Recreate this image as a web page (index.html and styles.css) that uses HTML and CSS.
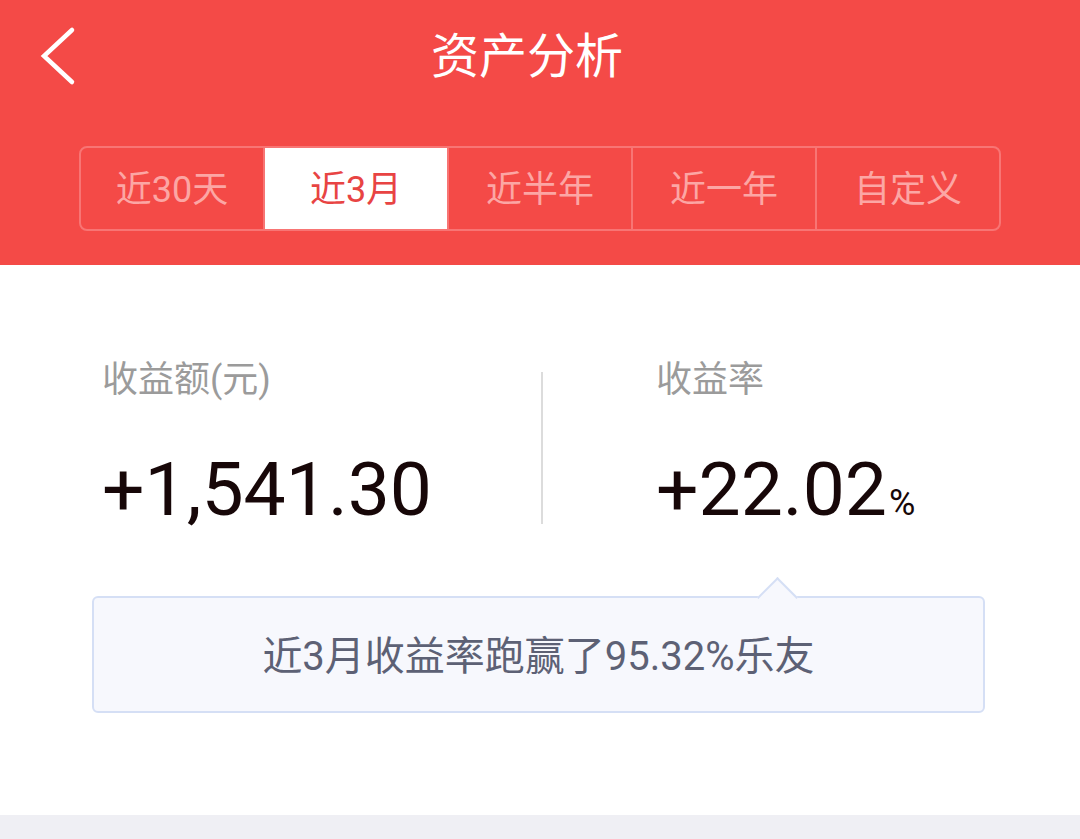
FILE: index.html
```html
<!DOCTYPE html>
<html lang="zh-CN">

<head>
    <meta charset="UTF-8">
    <meta name="viewport" content="width=device-width, initial-scale=1.0">
    <title>资产分析</title>
    <link rel="stylesheet" href="styles.css">
</head>

<body>

    <div class="header">
        <div class="navbar">
            <a class="back" href="#">
                <svg width="40" height="60" viewBox="0 0 40 60">
                    <polyline points="32,4 4,30 32,56" fill="none" stroke="#fff" stroke-width="4.5" stroke-linecap="round" stroke-linejoin="miter"/>
                </svg>
            </a>
            <h1 class="title">资产分析</h1>
            <div></div>
        </div>
        <div class="tabs">
            <div class="tab">近30天</div>
            <div class="tab active">近3月</div>
            <div class="tab">近半年</div>
            <div class="tab">近一年</div>
            <div class="tab">自定义</div>
        </div>
    </div>

    <div class="summary">
        <div class="stats">
            <div class="stat">
                <div class="stat-label">收益额(元)</div>
                <div class="stat-value">+1,541.30</div>
            </div>
            <div class="divider"></div>
            <div class="stat stat-right">
                <div class="stat-label">收益率</div>
                <div class="stat-value">+22.02<span class="unit">%</span></div>
            </div>
        </div>

        <div class="tip">
            <span class="tip-arrow"></span>
            近3月收益率跑赢了95.32%乐友
        </div>
    </div>

    <div class="footer-gap"></div>

</body>

</html>
```

FILE: styles.css
```css
body {
    margin: 0;
    padding: 0;
    font-family: Roboto, "Noto Sans CJK SC", sans-serif;
    background-color: #efeff4;
}

.header {
    background-color: #f44a47;
    height: 265px;
    box-sizing: border-box;
}

.navbar {
    display: grid;
    grid-template-columns: 1fr auto 1fr;
    align-items: center;
    height: 112px;
}

.back {
    display: flex;
    align-items: center;
    padding-left: 40px;
    height: 112px;
}

.title {
    margin: 0 26px 8px 0;
    color: #fff;
    font-size: 48px;
    font-weight: normal;
    line-height: 96px;
    font-family: "Noto Sans CJK SC", sans-serif;
}

.tabs {
    display: flex;
    margin: 34px 79px 0 79px;
    border: 2px solid #f87574;
    border-radius: 8px;
    height: 85px;
    box-sizing: border-box;
    overflow: hidden;
}

.tab {
    flex: 1;
    display: flex;
    align-items: center;
    justify-content: center;
    color: #fca6a4;
    font-size: 36px;
    padding-bottom: 6px;
    border-left: 2px solid #f87574;
}

.tab:first-child {
    border-left: none;
}

.tab.active {
    background-color: #fff;
    color: #e84443;
}

.summary {
    background-color: #fff;
    height: 550px;
    box-sizing: border-box;
    padding-top: 93px;
}

.stats {
    display: flex;
    padding-left: 102px;
}

.stat {
    width: 439px;
    flex-shrink: 0;
}

.stat-right {
    width: auto;
    flex: 1;
    padding-left: 113px;
}

.stat-label {
    color: #9b9b9b;
    font-size: 36px;
    line-height: 44px;
}

.stat-value {
    color: #170708;
    font-size: 75px;
    line-height: 90px;
    margin-top: 42px;
}

.unit {
    font-size: 36px;
    margin-left: 2px;
}

.divider {
    width: 2px;
    height: 152px;
    margin-top: 14px;
    background-color: #dcdcdc;
    flex-shrink: 0;
}

.tip {
    position: relative;
    margin: 48px 95px 0 92px;
    height: 117px;
    box-sizing: border-box;
    border: 2px solid #d5dff5;
    border-radius: 6px;
    background-color: #f7f8fd;
    display: flex;
    align-items: center;
    justify-content: center;
    color: #5d6175;
    font-size: 40px;
    padding-bottom: 4px;
}

.tip-arrow {
    position: absolute;
    top: -15px;
    left: 669px;
    width: 27px;
    height: 27px;
    background-color: #f7f8fd;
    border-top: 2px solid #d5dff5;
    border-left: 2px solid #d5dff5;
    transform: rotate(45deg);
}

.footer-gap {
    height: 40px;
}
```
